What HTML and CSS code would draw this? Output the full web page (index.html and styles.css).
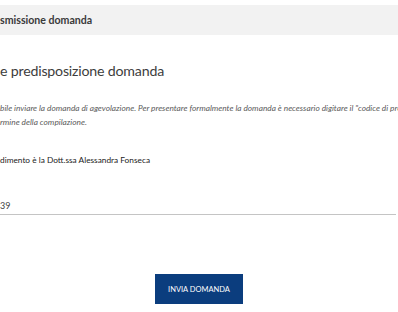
FILE: index.html
```html
<!DOCTYPE html>
<html lang="it">
<head>
  <meta charset="UTF-8">
  <meta name="viewport" content="width=device-width, initial-scale=1.0">
  <title>Trasmissione domanda</title>
  <link rel="stylesheet" href="styles.css">
</head>
<body>
  <div class="page-header">
    <span class="page-header-title">smissione domanda</span>
  </div>

  <div class="content">
    <h1>e predisposizione domanda</h1>

    <p class="note">bile inviare la domanda di agevolazione. Per presentare formalmente la domanda è necessario digitare il "codice di protocollo"<br>rmine della compilazione.</p>

    <p class="manager">dimento è la Dott.ssa Alessandra Fonseca</p>

    <div class="field">
      <input type="text" class="field-input" value="39" readonly>
    </div>

    <div class="actions">
      <button class="btn btn-primary" type="button">Invia domanda</button>
    </div>
  </div>
</body>
</html>
```

FILE: styles.css
```css
:root {
  --primary: #0b3d7e;
  --gray-light: #f2f2f2;
  --text: #333;
  --text-muted: #5a5a5a;
  --border: #c4c4c4;
}

* {
  box-sizing: border-box;
  margin: 0;
  padding: 0;
}

body {
  font-family: 'Lato', 'DejaVu Sans', sans-serif;
  background: #fff;
  color: var(--text);
  overflow: hidden;
  padding-top: 5px;
}

.page-header {
  background: var(--gray-light);
  height: 30px;
  display: flex;
  align-items: center;
}

.page-header-title {
  font-size: 10.6px;
  font-weight: 700;
  color: #3a3a3a;
}

.content {
  padding-top: 26px;
}

h1 {
  font-size: 14.2px;
  font-weight: 400;
  color: #3d3d3d;
  line-height: 20px;
  letter-spacing: -0.2px;
}

.note {
  margin-top: 20px;
  font-size: 8.3px;
  font-style: italic;
  color: var(--text-muted);
  line-height: 14px;
  white-space: nowrap;
}

.manager {
  margin-top: 24px;
  font-size: 8.3px;
  color: #222;
  line-height: 14px;
}

.field {
  margin-top: 26px;
  width: 396px;
}

.field-input {
  width: 100%;
  border: none;
  border-bottom: 1px solid var(--border);
  font-family: inherit;
  font-size: 9px;
  color: #444;
  padding: 0 0 3px;
  outline: none;
  background: transparent;
}

.actions {
  margin-top: 59px;
  display: flex;
  justify-content: center;
}

.btn {
  width: 88px;
  height: 30px;
  border: none;
  font-family: inherit;
  font-size: 7.5px;
  text-transform: uppercase;
  cursor: pointer;
}

.btn-primary {
  background: var(--primary);
  color: #fff;
}
```
